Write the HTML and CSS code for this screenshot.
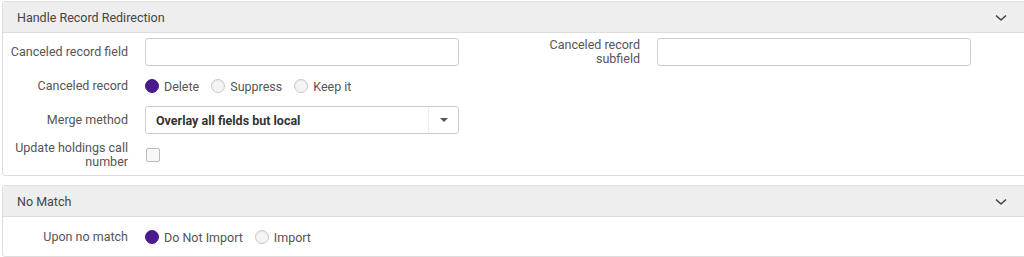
FILE: index.html
```html
<!DOCTYPE html>
<html>
<head>
<meta charset="utf-8">
<link rel="stylesheet" href="styles.css">
</head>
<body>
<div class="page">
  <section class="panel">
    <header class="panel-head">
      <span class="panel-title">Handle Record Redirection</span>
      <svg class="chev" width="12" height="8" viewBox="0 0 12 8"><path d="M1 1.5 L6 6 L11 1.5" fill="none" stroke="#444" stroke-width="1.6"/></svg>
    </header>
    <div class="panel-body form">
      <label class="lbl">Canceled record field</label>
      <div class="ctl"><input class="text" type="text"></div>
      <label class="lbl">Canceled record<br>subfield</label>
      <div class="ctl"><input class="text" type="text"></div>

      <label class="lbl">Canceled record</label>
      <div class="ctl radios">
        <span class="radio on"></span><span class="rtext">Delete</span>
        <span class="radio"></span><span class="rtext">Suppress</span>
        <span class="radio"></span><span class="rtext">Keep it</span>
      </div>
      <div></div><div></div>

      <label class="lbl">Merge method</label>
      <div class="ctl">
        <div class="select"><span class="sel-text">Overlay all fields but local</span><span class="sel-btn"><span class="caret"></span></span></div>
      </div>
      <div></div><div></div>

      <label class="lbl">Update holdings call<br>number</label>
      <div class="ctl"><span class="check"></span></div>
      <div></div><div></div>
    </div>
  </section>

  <section class="panel second">
    <header class="panel-head">
      <span class="panel-title">No Match</span>
      <svg class="chev" width="12" height="8" viewBox="0 0 12 8"><path d="M1 1.5 L6 6 L11 1.5" fill="none" stroke="#444" stroke-width="1.6"/></svg>
    </header>
    <div class="panel-body form small">
      <label class="lbl">Upon no match</label>
      <div class="ctl radios">
        <span class="radio on"></span><span class="rtext">Do Not Import</span>
        <span class="radio"></span><span class="rtext">Import</span>
      </div>
      <div></div><div></div>
    </div>
  </section>
</div>
</body>
</html>
```

FILE: styles.css
```css
html, body {
  margin: 0;
  padding: 0;
  overflow: hidden;
  background: #fff;
}
body {
  font-family: Roboto, "Liberation Sans", sans-serif;
  font-size: 12.5px;
  color: #555;
}
.page {
  padding: 1px 0 0 2px;
  width: 1040px;
}
.panel {
  border: 1px solid #dddddd;
  border-radius: 3px;
  background: #fff;
}
.panel.second {
  margin-top: 9px;
}
.panel-head {
  height: 30px;
  background: #eeeeee;
  border-bottom: 1px solid #dddddd;
  display: flex;
  align-items: center;
  padding-left: 14px;
  padding-right: 18px;
  width: 990px;
}
.panel-title {
  flex: 1;
  color: #444;
}
.chev {
  margin-top: 1px;
}
.form {
  display: grid;
  grid-template-columns: 125px 314px 164px 314px;
  column-gap: 17px;
  row-gap: 7px;
  padding: 5px 0 6px 0;
}
.form.small {
  padding: 7px 0 6px 0;
}
.lbl {
  text-align: right;
  line-height: 14px;
  align-self: center;
  color: #555;
}
.ctl {
  display: flex;
  align-items: center;
  min-height: 26px;
}
.text {
  box-sizing: border-box;
  width: 314px;
  height: 28px;
  border: 1px solid #cccccc;
  border-radius: 3px;
  margin: 0;
  padding: 0 8px;
  font: inherit;
}
.radios .radio {
  width: 14px;
  height: 14px;
  border-radius: 50%;
  border: 1px solid #c8c8c8;
  background: #f4f4f4;
  box-sizing: border-box;
  box-shadow: inset 0 1px 1px rgba(0,0,0,0.05);
  flex: none;
}
.radios .radio.on {
  background: #4b1a8c;
  border-color: #4b1a8c;
}
.rtext {
  margin: 0 12px 0 5px;
  color: #555;
}
.select {
  box-sizing: border-box;
  width: 314px;
  height: 28px;
  border: 1px solid #cccccc;
  border-radius: 3px;
  display: flex;
  align-items: center;
}
.sel-text {
  flex: 1;
  padding-left: 10px;
  font-weight: bold;
  color: #333;
}
.sel-btn {
  width: 29px;
  height: 100%;
  border-left: 1px solid #eeeeee;
  display: flex;
  align-items: center;
  justify-content: center;
}
.caret {
  width: 0;
  height: 0;
  border-left: 4px solid transparent;
  border-right: 4px solid transparent;
  border-top: 4px solid #555;
}
.check {
  width: 12px;
  height: 12px;
  border: 1px solid #bbbbbb;
  border-radius: 2px;
  background: #f7f7f7;
  margin-left: 1px;
}
```
